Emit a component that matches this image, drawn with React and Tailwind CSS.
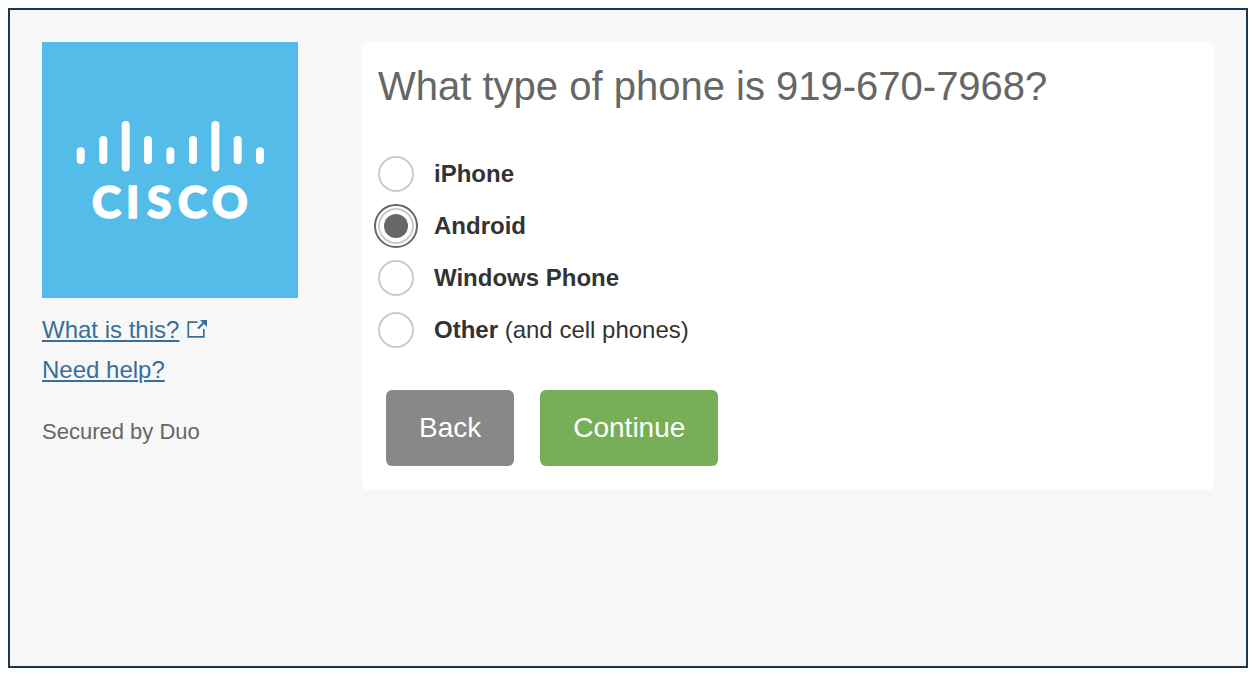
import { useState } from "react";

const OPTIONS = [
  { id: "iphone", name: "iPhone" },
  { id: "android", name: "Android" },
  { id: "windows", name: "Windows Phone" },
  { id: "other", name: "Other", note: "(and cell phones)" },
];

const BARS = [
  { x: 38.7, top: 105.3, bottom: 122 },
  { x: 61.3, top: 94, bottom: 122 },
  { x: 83.7, top: 79, bottom: 129.5 },
  { x: 106, top: 94, bottom: 122 },
  { x: 128.4, top: 105.3, bottom: 122 },
  { x: 151, top: 94, bottom: 122 },
  { x: 173.4, top: 79, bottom: 129.5 },
  { x: 195.7, top: 94, bottom: 122 },
  { x: 218, top: 105.3, bottom: 122 },
];

function CiscoLogo() {
  return (
    <svg viewBox="0 0 256 256" role="img" aria-label="Cisco" className="block size-64 bg-[#54bce8]">
      {BARS.map((bar) => (
        <rect
          key={bar.x}
          x={bar.x - 4}
          y={bar.top}
          width="8"
          height={bar.bottom - bar.top}
          rx="4"
          fill="#fff"
        />
      ))}
      <text
        x="50 84 105 136 170"
        y="176"
        fill="#fff"
        stroke="#fff"
        strokeWidth="1.6"
        fontFamily="Lato, sans-serif"
        fontWeight="900"
        fontSize="44"
      >
        CISCO
      </text>
    </svg>
  );
}

function ExternalIcon() {
  return (
    <svg viewBox="0 0 20 20" aria-hidden="true" className="size-5" fill="none" stroke="currentColor">
      <path d="M10.5 2.2H1.3V16.9H16.8V9" strokeWidth="1.7" />
      <path d="M11 8.5L17 2.5" strokeWidth="2.2" />
      <path d="M13 0H20V7Z" fill="currentColor" stroke="none" />
    </svg>
  );
}

export default function App() {
  const [phone, setPhone] = useState("android");

  return (
    <div className="flex min-h-screen p-2 font-['Liberation_Sans',Arial,sans-serif]">
      <div className="flex flex-1 items-start gap-16 border-2 border-[#1a3650] bg-[#f7f7f7] p-8">
        <aside className="w-64 shrink-0">
          <CiscoLogo />
          <nav className="mt-3 flex flex-col items-start text-2xl leading-10 text-[#36709a]">
            <a href="#about" className="flex items-center gap-2">
              <span className="underline decoration-2 underline-offset-2">What is this?</span>
              <ExternalIcon />
            </a>
            <a href="#help" className="underline decoration-2 underline-offset-2">
              Need help?
            </a>
          </nav>
          <p className="mt-6 text-[22px] leading-9 text-[#666]">Secured by Duo</p>
        </aside>

        <main className="min-w-0 flex-1 rounded-md bg-white px-4 py-6">
          <form onSubmit={(event) => event.preventDefault()}>
            <h1 id="question" className="text-[40px] leading-10 text-[#666]">
              What type of phone is 919-670-7968?
            </h1>
            <div role="radiogroup" aria-labelledby="question" className="mt-[50px] flex flex-col gap-4">
              {OPTIONS.map((option) => (
                <div key={option.id} className="flex h-9 items-center gap-5">
                  <input
                    type="radio"
                    name="phone"
                    id={option.id}
                    checked={phone === option.id}
                    onChange={() => setPhone(option.id)}
                    className="size-9 shrink-0 appearance-none rounded-full border-2 border-[#ccc] bg-white bg-clip-content p-1 outline-offset-2 outline-[#666] checked:bg-[#666] checked:outline-2"
                  />
                  <label htmlFor={option.id} className="text-2xl text-[#333]">
                    <b>{option.name}</b>
                    {option.note && ` ${option.note}`}
                  </label>
                </div>
              ))}
            </div>
            <div className="mt-[42px] ml-2 flex gap-[26px] text-[28px] leading-7 text-white">
              <button type="button" className="rounded-md bg-[#888] px-[33px] py-6">
                Back
              </button>
              <button type="submit" className="rounded-md bg-[#77af58] px-[33px] py-6">
                Continue
              </button>
            </div>
          </form>
        </main>
      </div>
    </div>
  );
}
